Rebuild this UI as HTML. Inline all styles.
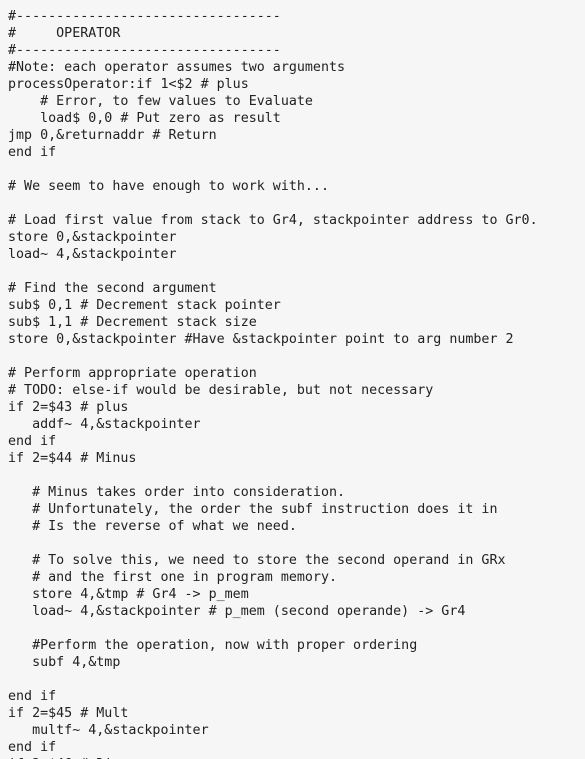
<!DOCTYPE html>
<html><head><meta charset="utf-8"><style>
html,body{margin:0;padding:0;background:#f6f6f6;width:585px;height:759px;overflow:hidden}
pre{margin:0;padding:8px 0 0 8px;font-family:"DejaVu Sans Mono","Liberation Mono",monospace;font-size:13.33px;line-height:17px;color:#222;white-space:pre}
</style></head><body><pre>#---------------------------------
#     OPERATOR
#---------------------------------
#Note: each operator assumes two arguments
processOperator:if 1&lt;$2 # plus
    # Error, to few values to Evaluate
    load$ 0,0 # Put zero as result
jmp 0,&amp;returnaddr # Return
end if

# We seem to have enough to work with...

# Load first value from stack to Gr4, stackpointer address to Gr0.
store 0,&amp;stackpointer
load~ 4,&amp;stackpointer

# Find the second argument
sub$ 0,1 # Decrement stack pointer
sub$ 1,1 # Decrement stack size
store 0,&amp;stackpointer #Have &amp;stackpointer point to arg number 2

# Perform appropriate operation
# TODO: else-if would be desirable, but not necessary
if 2=$43 # plus
   addf~ 4,&amp;stackpointer
end if
if 2=$44 # Minus

   # Minus takes order into consideration.
   # Unfortunately, the order the subf instruction does it in
   # Is the reverse of what we need.

   # To solve this, we need to store the second operand in GRx
   # and the first one in program memory.
   store 4,&amp;tmp # Gr4 -&gt; p_mem
   load~ 4,&amp;stackpointer # p_mem (second operande) -&gt; Gr4

   #Perform the operation, now with proper ordering
   subf 4,&amp;tmp

end if
if 2=$45 # Mult
   multf~ 4,&amp;stackpointer
end if
if 2=$46 # Div
</pre></body></html>
